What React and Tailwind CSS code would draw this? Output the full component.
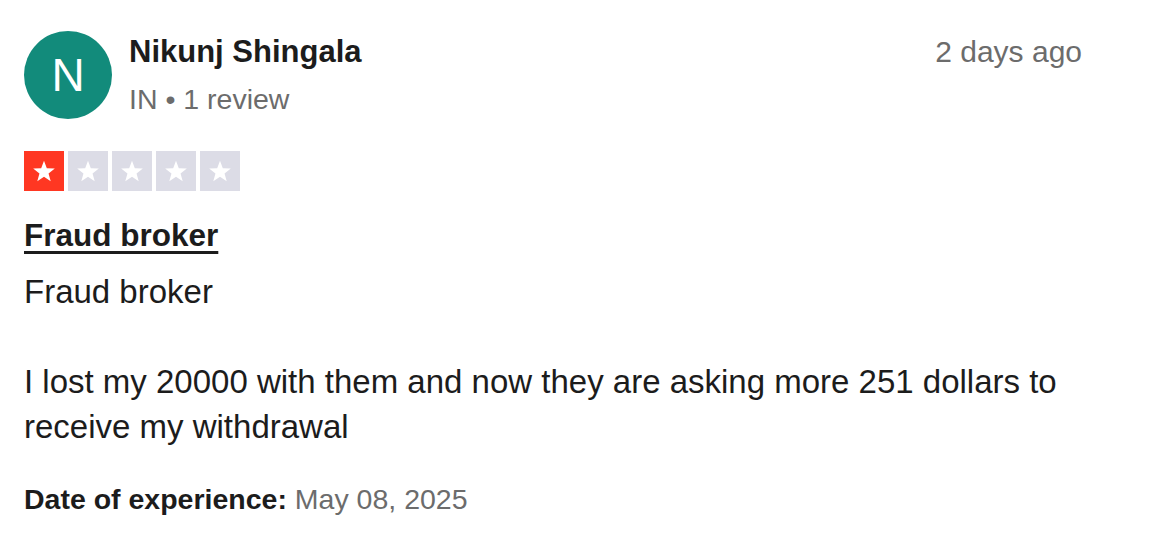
import React from 'react';

const Star = () => (
    <svg viewBox="0 0 24 24" className="w-[26px] h-[26px]" fill="#fff">
        <path d="M12 2.5l2.6 6.9 7.4.3-5.8 4.6 2 7.1L12 17.3l-6.2 4.1 2-7.1L2 9.7l7.4-.3z" />
    </svg>
);

const App = () => {
    const rating = 1;
    return (
        <div className="w-[1160px] h-[550px] bg-white text-[#1c1c1c] font-['Liberation_Sans',Arial,sans-serif] pl-6 pr-[70px] pt-[31px]">
            <div className="flex items-start">
                <div className="w-[88px] h-[88px] rounded-full bg-[#128b7b] text-white flex items-center justify-center text-[46px] shrink-0">
                    N
                </div>
                <div className="ml-[17px] flex-1 pt-[1px]">
                    <div className="text-[31px] font-bold leading-[40px]">Nikunj Shingala</div>
                    <div className="text-[28.5px] text-[#6c6c6c] leading-[34px] mt-[10px]">IN • 1 review</div>
                </div>
                <div className="text-[30px] text-[#6c6c6c] leading-[40px] pt-[1px] mr-[8px]">2 days ago</div>
            </div>

            <div className="flex gap-[4px] mt-[32px]">
                {[0, 1, 2, 3, 4].map((i) => (
                    <div
                        key={i}
                        className={`w-[40px] h-[40px] flex items-center justify-center ${i < rating ? 'bg-[#ff3722]' : 'bg-[#dcdce6]'}`}
                    >
                        <Star />
                    </div>
                ))}
            </div>

            <h2 className="text-[31.5px] font-bold underline underline-offset-[5px] decoration-[3px] leading-[40px] mt-[24px]">
                Fraud broker
            </h2>

            <p className="text-[33px] leading-[45px] mt-[14px]">
                Fraud broker
                <br />
                <br />
                I lost my 20000 with them and now they are asking more 251 dollars to receive my withdrawal
            </p>

            <div className="text-[28.5px] leading-[40px] mt-[30px]">
                <span className="font-bold">Date of experience:</span>{' '}
                <span className="text-[#6c6c6c]">May 08, 2025</span>
            </div>
        </div>
    );
};

export default App;
